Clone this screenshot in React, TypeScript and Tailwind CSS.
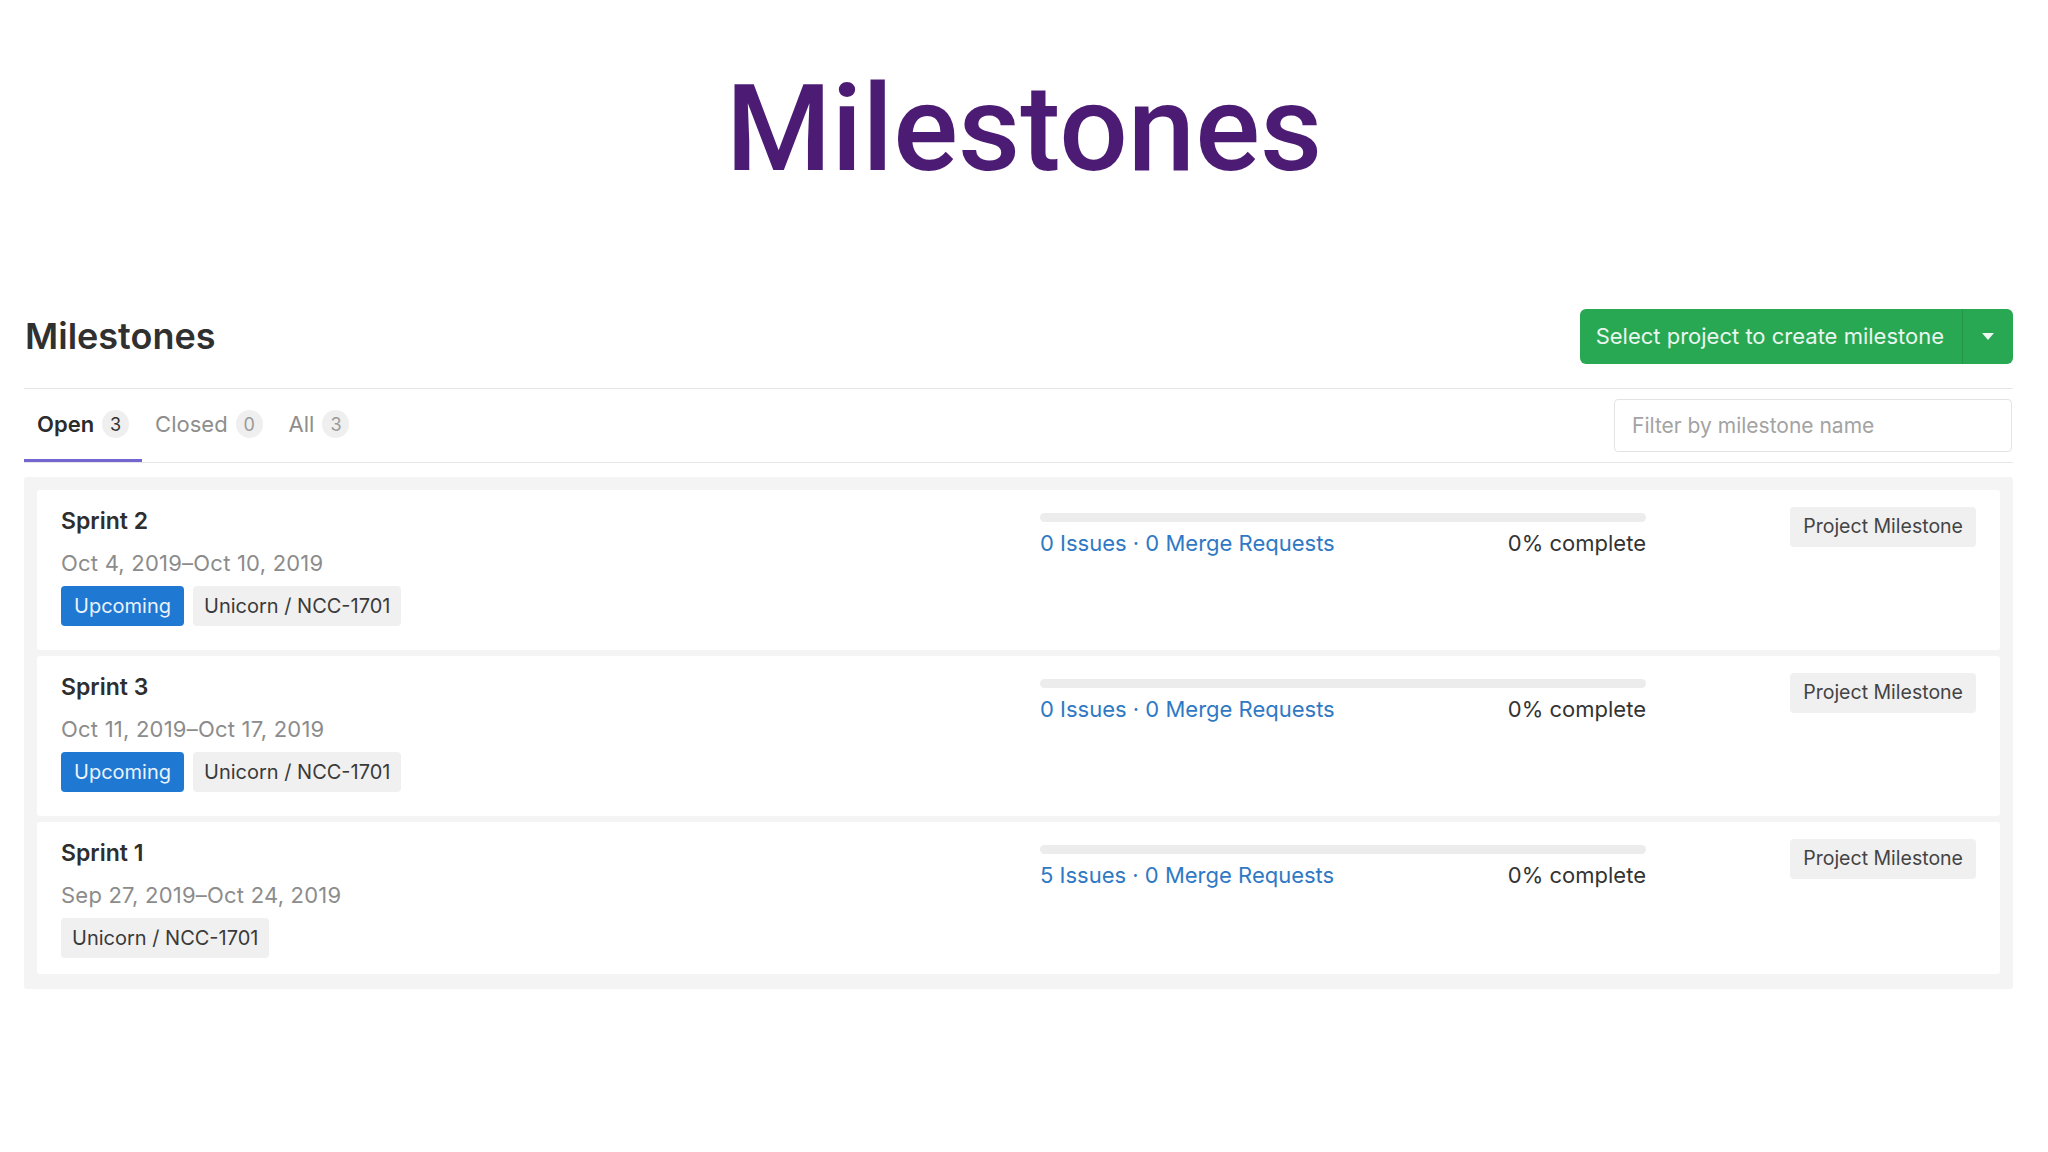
import React from "react";

type Milestone = {
  title: string;
  dates: string;
  upcoming: boolean;
  issues: number;
  last?: boolean;
};

const milestones: Milestone[] = [
  { title: "Sprint 2", dates: "Oct 4, 2019–Oct 10, 2019", upcoming: true, issues: 0 },
  { title: "Sprint 3", dates: "Oct 11, 2019–Oct 17, 2019", upcoming: true, issues: 0 },
  { title: "Sprint 1", dates: "Sep 27, 2019–Oct 24, 2019", upcoming: false, issues: 5, last: true },
];

function Tab({ label, count, active }: { label: string; count: number; active?: boolean }) {
  return (
    <div
      className={`flex items-center h-full px-[13px] border-b-[3px] ${
        active ? "border-[#7466d0]" : "border-transparent"
      }`}
    >
      <span
        className={`text-[22px] leading-[30px] ${
          active ? "font-semibold text-[#2b2b2b]" : "text-[#8e8e8e]"
        }`}
      >
        {label}
      </span>
      <span
        className={`ml-[8px] w-[27px] h-[28px] rounded-full bg-[#efefef] flex items-center justify-center text-[18px] ${
          active ? "text-[#333]" : "text-[#9a9a9a]"
        }`}
      >
        {count}
      </span>
    </div>
  );
}

function MilestoneCard({ m }: { m: Milestone }) {
  return (
    <div
      className={`flex bg-white rounded-[3px] px-[24px] pt-[16px] ${m.last ? "pb-[16px]" : "pb-[24px]"}`}
    >
      <div className="w-[979px] flex flex-col">
        <div className="text-[23px] leading-[30px] font-semibold text-[#2e2e2e]">{m.title}</div>
        <div className="mt-[12px] text-[22px] leading-[30px] text-[#8c8c8c] tracking-[0.01em]">{m.dates}</div>
        <div className="mt-[8px] flex gap-[9px]">
          {m.upcoming && (
            <span className="h-[40px] px-[13px] rounded-[4px] bg-[#1f78d1] text-[#eaf3fc] text-[20px] flex items-center">
              Upcoming
            </span>
          )}
          <span className="h-[40px] px-[11px] rounded-[4px] bg-[#f0f0f0] text-[#3a3a3a] text-[20px] flex items-center">
            Unicorn / NCC-1701
          </span>
        </div>
      </div>
      <div className="w-[606px] pt-[7px]">
        <div className="h-[9px] rounded-full bg-[#ececec]" />
        <div className="mt-[6px] flex justify-between text-[22px] leading-[30px]">
          <span className="text-[#2f79c4]">
            {m.issues} Issues · 0 Merge Requests
          </span>
          <span className="text-[#333]">0% complete</span>
        </div>
      </div>
      <div className="flex-1 flex justify-end pt-[1px]">
        <span className="h-[40px] px-[13px] rounded-[4px] bg-[#f0f0f0] text-[#444] text-[19.5px] flex items-center self-start">
          Project Milestone
        </span>
      </div>
    </div>
  );
}

export default function App() {
  return (
    <div className="w-[2048px] h-[1152px] bg-white overflow-hidden" style={{ fontFamily: "Inter, 'Noto Sans', sans-serif" }}>
      <h1
        className="mt-[69px] text-center text-[121px] leading-[121px] font-medium text-[#4c1b74]"
        style={{ fontFamily: "Roboto, 'Liberation Sans', sans-serif" }}
      >
        Milestones
      </h1>

      <div className="ml-[24px] w-[1989px] mt-[119px]">
        {/* header */}
        <div className="flex items-center justify-between pb-[24px] border-b border-[#e6e6e6]">
          <h2 className="text-[36px] leading-[55px] font-semibold text-[#303030] pl-[1px]">Milestones</h2>
          <div className="flex h-[55px] rounded-[6px] bg-[#28a853] text-[#e9f6ee] overflow-hidden">
            <div className="flex items-center pl-[16px] pr-[18px] text-[22px] border-r border-[#21964a]">
              Select project to create milestone
            </div>
            <div className="w-[50px] flex items-center justify-center">
              <svg width="12" height="7" viewBox="0 0 12 7">
                <path d="M0 0h12L6 7z" fill="#eef8f1" />
              </svg>
            </div>
          </div>
        </div>

        {/* tabs */}
        <div className="flex items-center justify-between h-[74px] border-b border-[#e6e6e6]">
          <div className="flex h-full">
            <Tab label="Open" count={3} active />
            <Tab label="Closed" count={0} />
            <Tab label="All" count={3} />
          </div>
          <div className="w-[398px] h-[53px] mr-[1px] border border-[#e3e3e3] rounded-[4px] flex items-center pl-[17px] text-[21px] text-[#a3a3a3]">
            Filter by milestone name
          </div>
        </div>

        {/* list */}
        <div className="mt-[14px] bg-[#f4f4f4] rounded-[3px] px-[13px] pt-[13px] pb-[15px] flex flex-col gap-[6px]">
          {milestones.map((m) => (
            <MilestoneCard key={m.title} m={m} />
          ))}
        </div>
      </div>
    </div>
  );
}
